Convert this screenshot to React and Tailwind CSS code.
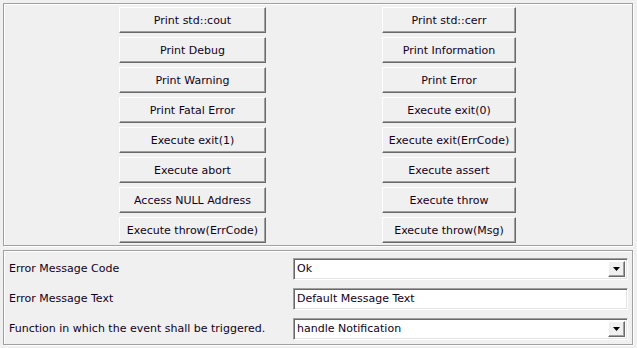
import React from 'react';

const leftButtons = [
  'Print std::cout',
  'Print Debug',
  'Print Warning',
  'Print Fatal Error',
  'Execute exit(1)',
  'Execute abort',
  'Access NULL Address',
  'Execute throw(ErrCode)',
];

const rightButtons = [
  'Print std::cerr',
  'Print Information',
  'Print Error',
  'Execute exit(0)',
  'Execute exit(ErrCode)',
  'Execute assert',
  'Execute throw',
  'Execute throw(Msg)',
];

const WinButton = ({ label }) => (
  <button className="h-[26px] w-full bg-[#f0f0f0] border border-t-white border-l-white border-b-[#696969] border-r-[#696969] shadow-[inset_-1px_-1px_0_#a0a0a0] text-[#10001a] text-center leading-none">
    {label}
  </button>
);

const DropArrow = () => (
  <div className="absolute right-[2px] top-[2px] bottom-[2px] w-[17px] bg-[#f0f0f0] border border-t-white border-l-white border-b-[#696969] border-r-[#696969] shadow-[inset_-1px_-1px_0_#a0a0a0] flex items-center justify-center">
    <svg width="7" height="4" viewBox="0 0 7 4">
      <path d="M0 0h7L3.5 4z" fill="#000" />
    </svg>
  </div>
);

const Field = ({ value, combo }) => (
  <div className="relative h-[22px] w-[335px] bg-white border border-t-[#a0a0a0] border-l-[#a0a0a0] border-b-white border-r-white shadow-[inset_1px_1px_0_#696969,inset_-1px_-1px_0_#e3e3e3] flex items-center pl-[3px] text-[#10001a]">
    {value}
    {combo && <DropArrow />}
  </div>
);

const rows = [
  { label: 'Error Message Code', value: 'Ok', combo: true },
  { label: 'Error Message Text', value: 'Default Message Text', combo: false },
  { label: 'Function in which the event shall be triggered.', value: 'handle Notification', combo: true },
];

export default function App() {
  return (
    <div className="w-[637px] h-[348px] bg-[#f0f0f0] pt-[3px] pl-[3px] text-[11px] text-[#10001a] font-['DejaVu_Sans',sans-serif] overflow-hidden">
      {/* Button group */}
      <div className="w-[630px] h-[243px] border border-[#a0a0a0] shadow-[inset_1px_1px_0_#fff,1px_1px_0_#fff] pt-[3px] pl-[115px] flex gap-[116px]">
        <div className="w-[147px] flex flex-col gap-[4px]">
          {leftButtons.map((b) => (
            <WinButton key={b} label={b} />
          ))}
        </div>
        <div className="w-[134px] flex flex-col gap-[4px]">
          {rightButtons.map((b) => (
            <WinButton key={b} label={b} />
          ))}
        </div>
      </div>

      {/* Settings group */}
      <div className="mt-[4px] w-[630px] h-[95px] border border-[#a0a0a0] shadow-[inset_1px_1px_0_#fff,1px_1px_0_#fff] pt-[7px] pl-[5px] flex flex-col gap-[8px]">
        {rows.map((r) => (
          <div key={r.label} className="flex items-center">
            <div className="w-[284px]">{r.label}</div>
            <Field value={r.value} combo={r.combo} />
          </div>
        ))}
      </div>
    </div>
  );
}
